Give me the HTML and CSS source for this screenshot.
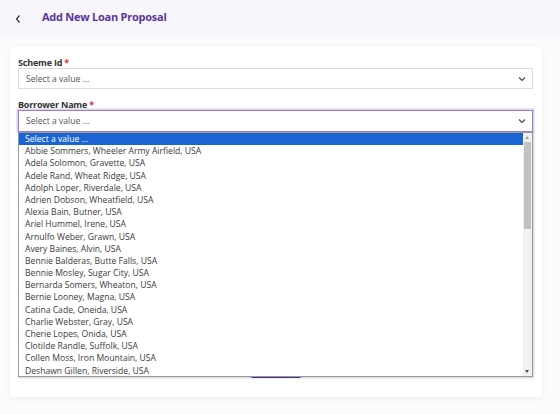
FILE: index.html
```html
<!DOCTYPE html>
<html>
<head>
<meta charset="utf-8">
<link rel="stylesheet" href="styles.css">
</head>
<body>
<div class="header">
  <svg class="back" width="8" height="10" viewBox="0 0 8 10"><path d="M5.5 1.5 L2.5 5 L5.5 8.5" fill="none" stroke="#333" stroke-width="1.2"/></svg>
  <span class="title">Add New Loan Proposal</span>
</div>
<div class="main">
  <div class="card">
    <div class="field">
      <div class="label">Scheme Id <span class="req">*</span></div>
      <div class="select">
        <span>Select a value ...</span>
        <svg class="chev" width="8" height="6" viewBox="0 0 8 6"><path d="M1 1.5 L4 4.5 L7 1.5" fill="none" stroke="#444" stroke-width="1.1"/></svg>
      </div>
    </div>
    <div class="field">
      <div class="label">Borrower Name <span class="req">*</span></div>
      <div class="select-wrap">
        <div class="select focused">
          <span>Select a value ...</span>
          <svg class="chev" width="8" height="6" viewBox="0 0 8 6"><path d="M1 1.5 L4 4.5 L7 1.5" fill="none" stroke="#444" stroke-width="1.1"/></svg>
        </div>
        <div class="dropdown">
          <ul class="options">
            <li class="active">Select a value ...</li>
            <li>Abbie Sommers, Wheeler Army Airfield, USA</li>
            <li>Adela Solomon, Gravette, USA</li>
            <li>Adele Rand, Wheat Ridge, USA</li>
            <li>Adolph Loper, Riverdale, USA</li>
            <li>Adrien Dobson, Wheatfield, USA</li>
            <li>Alexia Bain, Butner, USA</li>
            <li>Ariel Hummel, Irene, USA</li>
            <li>Arnulfo Weber, Grawn, USA</li>
            <li>Avery Baines, Alvin, USA</li>
            <li>Bennie Balderas, Butte Falls, USA</li>
            <li>Bennie Mosley, Sugar City, USA</li>
            <li>Bernarda Somers, Wheaton, USA</li>
            <li>Bernie Looney, Magna, USA</li>
            <li>Catina Cade, Oneida, USA</li>
            <li>Charlie Webster, Gray, USA</li>
            <li>Cherie Lopes, Onida, USA</li>
            <li>Clotilde Randle, Suffolk, USA</li>
            <li>Collen Moss, Iron Mountain, USA</li>
            <li>Deshawn Gillen, Riverside, USA</li>
          </ul>
          <div class="scrollbar">
            <div class="arrow up"></div>
            <div class="track"><div class="thumb"></div></div>
            <div class="arrow down"></div>
          </div>
        </div>
      </div>
    </div>
    <div class="actions">
      <button class="btn">Submit</button>
    </div>
  </div>
</div>
</body>
</html>
```
FILE: styles.css
```css
* { box-sizing: border-box; }
html, body { margin: 0; padding: 0; }
body {
  width: 560px;
  height: 414px;
  background: #fbfbfc;
  font-family: "Open Sans", "Noto Sans", sans-serif;
  color: #333;
  overflow: hidden;
}
.header {
  height: 37px;
  background: #f7f6fc;
  display: flex;
  align-items: center;
  padding-left: 14px;
}
.back { display: block; margin-top: 0; }
.title {
  margin-left: 20px;
  font-size: 11px;
  font-weight: 700;
  color: #5a3597;
  letter-spacing: -0.25px;
  margin-top: -5px;
}
.main {
  padding: 10px 18px 0 10px;
}
.card {
  width: 532px;
  height: 350px;
  background: #fff;
  border-radius: 3px;
  box-shadow: 0 1px 6px rgba(0,0,0,0.06);
  padding: 11px 9px 19px 8px;
  display: flex;
  flex-direction: column;
}
.field { margin-bottom: 11px; }
.label {
  font-size: 9px;
  font-weight: 700;
  color: #333;
  line-height: 10px;
  margin-bottom: 0;
  letter-spacing: -0.2px;
}
.req { color: #e0303a; }
.select-wrap { position: relative; }
.select {
  height: 21px;
  border: 1px solid #dcdcdc;
  background: #fff;
  display: flex;
  align-items: center;
  justify-content: space-between;
  padding: 0 6px 0 7px;
  font-size: 8.6px;
  color: #555;
}
.select.focused {
  height: 22px;
  border: 1px solid #9b82c4;
  box-shadow: 0 0 0 1.5px #dcd0ec;
}
.chev { display: block; }
.dropdown {
  position: absolute;
  top: 22px;
  left: 0;
  width: 515px;
  height: 245px;
  background: #fff;
  border: 1px solid #9a9a9a;
  box-shadow: 1px 1px 2px rgba(0,0,0,0.2);
  display: flex;
  z-index: 5;
}
.options {
  list-style: none;
  margin: 0;
  padding: 0;
  flex: 1;
  overflow: hidden;
}
.options li {
  height: 12.2px;
  line-height: 12.2px;
  font-size: 8.6px;
  color: #3a3a3a;
  padding-left: 6px;
  white-space: nowrap;
}
.options li.active {
  background: #1b64d4;
  color: #fff;
}
.scrollbar {
  width: 9px;
  background: #f1f1f1;
  display: flex;
  flex-direction: column;
}
.arrow { height: 9px; position: relative; }
.arrow::after {
  content: "";
  position: absolute;
  left: 2px;
  border-left: 2.5px solid transparent;
  border-right: 2.5px solid transparent;
}
.arrow.up::after { top: 3px; border-bottom: 3px solid #a3a3a3; }
.arrow.down::after { top: 3px; border-top: 3px solid #505050; }
.track { flex: 1; padding: 0 1px; }
.thumb {
  height: 87px;
  background: #c1c1c1;
}
.actions {
  margin-top: auto;
  display: flex;
  justify-content: center;
}
.btn {
  width: 52px;
  height: 20px;
  border: none;
  border-radius: 3px;
  background: #5a3597;
  color: #fff;
  font-family: inherit;
  font-size: 9px;
}
```
